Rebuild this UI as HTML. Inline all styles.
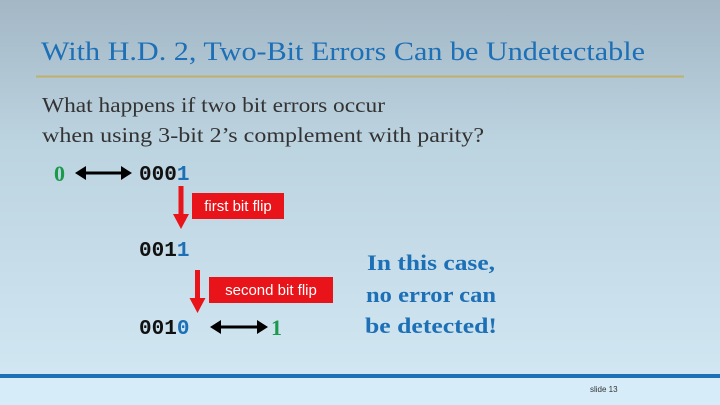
<!DOCTYPE html>
<html><head><meta charset="utf-8"><style>
html,body{margin:0;padding:0;width:720px;height:405px;overflow:hidden}
body{background:linear-gradient(#a3b7c5 0%,#bcd3e0 35%,#d3e9f4 100%)}
</style></head><body>
<svg width="720" height="405" xmlns="http://www.w3.org/2000/svg" style="position:absolute;left:0;top:0">
<rect x="0" y="378" width="720" height="27" fill="#d6ecf8"/>
<rect x="0" y="374" width="720" height="4" fill="#1d6fb6"/>
<line x1="36" y1="76.5" x2="684" y2="76.5" stroke="#c2b068" stroke-width="2"/>
<text x="41" y="60" font-family="Liberation Serif" font-size="26" fill="#1d6fb6" textLength="604" lengthAdjust="spacingAndGlyphs">With H.D. 2, Two-Bit Errors Can be Undetectable</text>
<text x="42" y="112" font-family="Liberation Serif" font-size="21" fill="#333" textLength="343" lengthAdjust="spacingAndGlyphs">What happens if two bit errors occur</text>
<text x="42" y="142" font-family="Liberation Serif" font-size="21" fill="#333" textLength="442" lengthAdjust="spacingAndGlyphs">when using 3-bit 2’s complement with parity?</text>
<g font-family="Liberation Mono" font-weight="bold" font-size="21">
<text x="139" y="180" fill="#111">000<tspan fill="#1d6fb6">1</tspan></text>
<text x="139" y="256" fill="#111">001<tspan fill="#1d6fb6">1</tspan></text>
<text x="139" y="334" fill="#111">001<tspan fill="#1d6fb6">0</tspan></text>
</g>
<g font-family="Liberation Serif" font-weight="bold" font-size="22" fill="#1a9a4a">
<text x="54" y="181">0</text><text x="271" y="335">1</text>
</g>
<g stroke="#000" stroke-width="3" fill="#000">
<line x1="82" y1="173" x2="124" y2="173"/><polygon points="75,173 86,166 86,180" stroke="none"/><polygon points="132,173 121,166 121,180" stroke="none"/>
<line x1="217" y1="327" x2="260" y2="327"/><polygon points="210,327 221,320 221,334" stroke="none"/><polygon points="268,327 257,320 257,334" stroke="none"/>
</g>
<g fill="#e8141a">
<rect x="178.5" y="186" width="5" height="30"/><polygon points="173,214 189,214 181,229"/>
<rect x="195" y="270" width="5" height="30"/><polygon points="189.5,298 205.5,298 197.5,313"/>
<rect x="192" y="193" width="92" height="26"/>
<rect x="209" y="277" width="124" height="26"/>
</g>
<g font-family="Liberation Sans" font-size="15" fill="#fff">
<text x="238" y="211" text-anchor="middle">first bit flip</text>
<text x="271" y="295" text-anchor="middle">second bit flip</text>
</g>
<g font-family="Liberation Serif" font-weight="bold" font-size="22" fill="#1d6fb6" text-anchor="middle">
<text x="431" y="270" textLength="128" lengthAdjust="spacingAndGlyphs">In this case,</text>
<text x="431" y="302" textLength="130" lengthAdjust="spacingAndGlyphs">no error can</text>
<text x="431" y="333" textLength="132" lengthAdjust="spacingAndGlyphs">be detected!</text>
</g>
<text x="590" y="392" font-family="Liberation Sans" font-size="8" fill="#333">slide 13</text>
</svg>
</body></html>
